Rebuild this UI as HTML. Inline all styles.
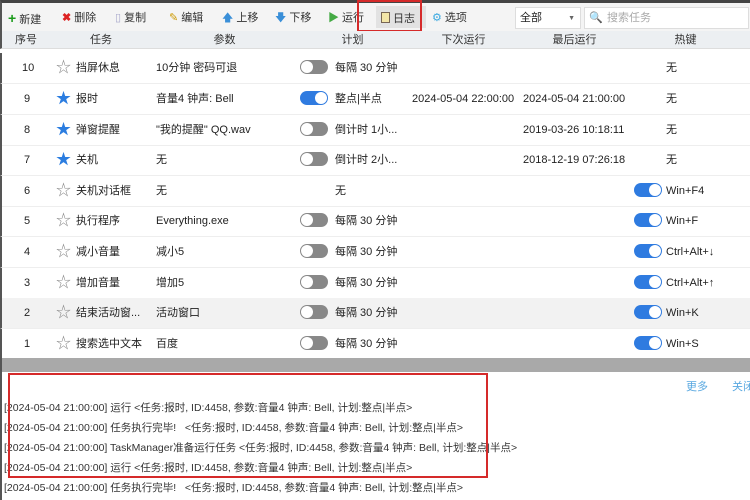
<!DOCTYPE html>
<html><head><meta charset="utf-8"><style>
*{margin:0;padding:0;box-sizing:border-box}
body{width:750px;height:500px;overflow:hidden;background:#fff;font-family:"Liberation Sans","Noto Sans CJK SC",sans-serif;font-size:11px;line-height:13px;color:#222;position:relative}
span,div{line-height:13px}
.tb{position:absolute;left:0;top:0;width:750px;height:31px;background:#f4f4f4;border-top:3px solid #444;border-left:2px solid #555}
.ti{position:absolute;top:9px;font-size:11px;color:#333;white-space:nowrap}
.hd{position:absolute;left:0;top:31px;width:750px;height:18px;background:#eceff2;border-bottom:1px solid #ddd;border-left:2px solid #555}
.hc{position:absolute;top:3px;text-align:center;color:#333}
.row{position:absolute;left:0;width:750px;height:31px;border-bottom:1px solid #eee;border-left:2px solid #555}
.row span{position:absolute;top:9px;white-space:nowrap}
.tg{position:absolute;top:7px;width:28px;height:14px;border-radius:7px;background:#888}
.tg::after{content:"";position:absolute;left:1px;top:1px;width:12px;height:12px;border-radius:6px;background:#fff}
.tg.on{background:#2f7be0}.tg.on::after{left:15px}
.row span.st{top:7px;font-size:15px;line-height:16px;color:#888}
.row span.st.f{color:#2b7de0}
.log{position:absolute;left:0;top:372px;width:750px;height:128px;background:#fff;border-left:2px solid #555}
.ll{position:absolute;left:2px;font-size:10.5px;color:#333;white-space:nowrap}
</style></head><body>
<div class="tb">
<span class="ti" style="left:6px"><b style="color:#1a9a1a;font-size:14px">+</b> 新建</span>
<span class="ti" style="left:60px"><b style="color:#d22">✖</b> 删除</span>
<span class="ti" style="left:113px"><span style="color:#aac">▯</span> 复制</span>
<span class="ti" style="left:167px"><span style="color:#c90">✎</span> 编辑</span>
<span class="ti" style="left:220px"><span style="color:#3a8fd8">🡅</span> 上移</span>
<span class="ti" style="left:273px"><span style="color:#3a8fd8">🡇</span> 下移</span>
<span class="ti" style="left:326px"><span style="color:#4a4">▶</span> 运行</span>
<div style="position:absolute;left:374px;top:3px;width:50px;height:22px;background:#e2e2e2"></div>
<span class="ti" style="left:379px"><span style="display:inline-block;width:9px;height:11px;border:1px solid #765;background:#f3e6a8;vertical-align:-1px"></span> 日志</span>
<span class="ti" style="left:430px"><span style="color:#3aa8e0">⚙</span> 选项</span>
<div style="position:absolute;left:513px;top:4px;width:66px;height:22px;background:#fff;border:1px solid #ddd"><span style="position:absolute;left:4px;top:4px">全部</span><span style="position:absolute;right:5px;top:4px;font-size:7px;color:#666">▼</span></div>
<div style="position:absolute;left:582px;top:4px;width:165px;height:22px;background:#fff;border:1px solid #ddd"><span style="position:absolute;left:4px;top:4px;color:#777">🔍</span><span style="position:absolute;left:22px;top:4px;color:#aaa">搜索任务</span></div>
</div>
<div style="position:absolute;left:357px;top:0;width:65px;height:32px;border:2px solid #d52a2a"></div>
<div class="hd">
<span class="hc" style="left:0;width:48px">序号</span><span class="hc" style="left:48px;width:102px">任务</span><span class="hc" style="left:150px;width:145px">参数</span><span class="hc" style="left:295px;width:111px">计划</span><span class="hc" style="left:406px;width:111px">下次运行</span><span class="hc" style="left:517px;width:111px">最后运行</span><span class="hc" style="left:628px;width:111px">热键</span>
</div>

<div class="row" style="top:53px"><span style="left:20px">10</span><span class="st" style="left:54px">☆</span><span style="left:74px">挡屏休息</span><span style="left:154px">10分钟 密码可退</span><div class="tg" style="left:298px"></div><span style="left:333px">每隔 30 分钟</span><span style="left:664px">无</span></div>
<div class="row" style="top:84px"><span style="left:22px">9</span><span class="st f" style="left:54px">★</span><span style="left:74px">报时</span><span style="left:154px">音量4 钟声: Bell</span><div class="tg on" style="left:298px"></div><span style="left:333px">整点|半点</span><span style="left:410px">2024-05-04 22:00:00</span><span style="left:521px">2024-05-04 21:00:00</span><span style="left:664px">无</span></div>
<div class="row" style="top:115px"><span style="left:22px">8</span><span class="st f" style="left:54px">★</span><span style="left:74px">弹窗提醒</span><span style="left:154px">"我的提醒" QQ.wav</span><div class="tg" style="left:298px"></div><span style="left:333px">倒计时 1小...</span><span style="left:521px">2019-03-26 10:18:11</span><span style="left:664px">无</span></div>
<div class="row" style="top:145px"><span style="left:22px">7</span><span class="st f" style="left:54px">★</span><span style="left:74px">关机</span><span style="left:154px">无</span><div class="tg" style="left:298px"></div><span style="left:333px">倒计时 2小...</span><span style="left:521px">2018-12-19 07:26:18</span><span style="left:664px">无</span></div>
<div class="row" style="top:176px"><span style="left:22px">6</span><span class="st" style="left:54px">☆</span><span style="left:74px">关机对话框</span><span style="left:154px">无</span><span style="left:333px">无</span><div class="tg on" style="left:632px"></div><span style="left:664px">Win+F4</span></div>
<div class="row" style="top:206px"><span style="left:22px">5</span><span class="st" style="left:54px">☆</span><span style="left:74px">执行程序</span><span style="left:154px">Everything.exe</span><div class="tg" style="left:298px"></div><span style="left:333px">每隔 30 分钟</span><div class="tg on" style="left:632px"></div><span style="left:664px">Win+F</span></div>
<div class="row" style="top:237px"><span style="left:22px">4</span><span class="st" style="left:54px">☆</span><span style="left:74px">减小音量</span><span style="left:154px">减小5</span><div class="tg" style="left:298px"></div><span style="left:333px">每隔 30 分钟</span><div class="tg on" style="left:632px"></div><span style="left:664px">Ctrl+Alt+↓</span></div>
<div class="row" style="top:268px"><span style="left:22px">3</span><span class="st" style="left:54px">☆</span><span style="left:74px">增加音量</span><span style="left:154px">增加5</span><div class="tg" style="left:298px"></div><span style="left:333px">每隔 30 分钟</span><div class="tg on" style="left:632px"></div><span style="left:664px">Ctrl+Alt+↑</span></div>
<div class="row" style="top:298px;background:#f2f2f2"><span style="left:22px">2</span><span class="st" style="left:54px">☆</span><span style="left:74px">结束活动窗...</span><span style="left:154px">活动窗口</span><div class="tg" style="left:298px"></div><span style="left:333px">每隔 30 分钟</span><div class="tg on" style="left:632px"></div><span style="left:664px">Win+K</span></div>
<div class="row" style="top:329px"><span style="left:22px">1</span><span class="st" style="left:54px">☆</span><span style="left:74px">搜索选中文本</span><span style="left:154px">百度</span><div class="tg" style="left:298px"></div><span style="left:333px">每隔 30 分钟</span><div class="tg on" style="left:632px"></div><span style="left:664px">Win+S</span></div>
<div style="position:absolute;left:0;top:358px;width:750px;height:14px;background:#a9a9a9;border-left:2px solid #555"></div>

<div class="log">
<span style="position:absolute;left:684px;top:9px;color:#59a8e0;white-space:nowrap">更多</span><span style="position:absolute;left:730px;top:9px;color:#59a8e0;white-space:nowrap">关闭</span>
<div class="ll" style="top:30px">[2024-05-04 21:00:00] 运行 &lt;任务:报时, ID:4458, 参数:音量4 钟声: Bell, 计划:整点|半点&gt;</div>
<div class="ll" style="top:50px">[2024-05-04 21:00:00] 任务执行完毕!&nbsp;&nbsp; &lt;任务:报时, ID:4458, 参数:音量4 钟声: Bell, 计划:整点|半点&gt;</div>
<div class="ll" style="top:70px">[2024-05-04 21:00:00] TaskManager准备运行任务 &lt;任务:报时, ID:4458, 参数:音量4 钟声: Bell, 计划:整点|半点&gt;</div>
<div class="ll" style="top:90px">[2024-05-04 21:00:00] 运行 &lt;任务:报时, ID:4458, 参数:音量4 钟声: Bell, 计划:整点|半点&gt;</div>
<div class="ll" style="top:110px">[2024-05-04 21:00:00] 任务执行完毕!&nbsp;&nbsp; &lt;任务:报时, ID:4458, 参数:音量4 钟声: Bell, 计划:整点|半点&gt;</div>
</div>
<div style="position:absolute;left:8px;top:373px;width:480px;height:105px;border:2px solid #d52a2a"></div>
</body></html>
